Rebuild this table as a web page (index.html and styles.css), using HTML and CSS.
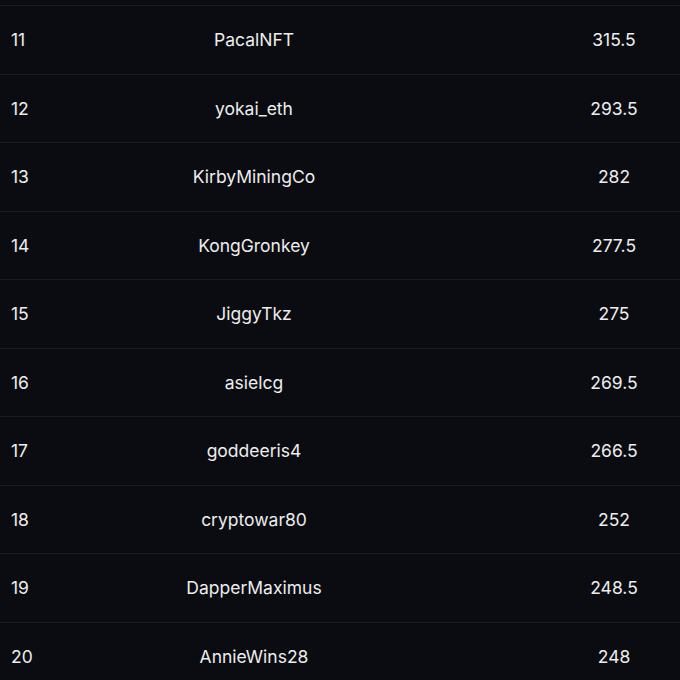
FILE: index.html
```html
<!DOCTYPE html>
<html>
<head>
<meta charset="utf-8">
<link rel="stylesheet" href="styles.css">
</head>
<body>
<div class="board">
  <div class="row"><span class="rank">11</span><span class="name">PacalNFT</span><span class="score">315.5</span></div>
  <div class="row"><span class="rank">12</span><span class="name">yokai_eth</span><span class="score">293.5</span></div>
  <div class="row"><span class="rank">13</span><span class="name">KirbyMiningCo</span><span class="score">282</span></div>
  <div class="row"><span class="rank">14</span><span class="name">KongGronkey</span><span class="score">277.5</span></div>
  <div class="row"><span class="rank">15</span><span class="name">JiggyTkz</span><span class="score">275</span></div>
  <div class="row"><span class="rank">16</span><span class="name">asielcg</span><span class="score">269.5</span></div>
  <div class="row"><span class="rank">17</span><span class="name">goddeeris4</span><span class="score">266.5</span></div>
  <div class="row"><span class="rank">18</span><span class="name">cryptowar80</span><span class="score">252</span></div>
  <div class="row"><span class="rank">19</span><span class="name">DapperMaximus</span><span class="score">248.5</span></div>
  <div class="row"><span class="rank">20</span><span class="name">AnnieWins28</span><span class="score">248</span></div>
</div>
</body>
</html>
```
FILE: styles.css
```css
html, body {
  margin: 0;
  padding: 0;
  background: #0b0c11;
  height: 100%;
  overflow: hidden;
}
.board {
  padding-top: 5px;
  font-family: Inter, "Liberation Sans", sans-serif;
  font-size: 17.5px;
  color: #ededed;
}
.row {
  display: grid;
  grid-template-columns: 120px 268px 1fr 132px;
  align-items: center;
  height: 68.5px;
  box-sizing: border-box;
  border-top: 1px solid #1a1b21;
}
.rank {
  padding-left: 11px;
}
.name, .score {
  text-align: center;
}
.score {
  grid-column: 4;
}
```
